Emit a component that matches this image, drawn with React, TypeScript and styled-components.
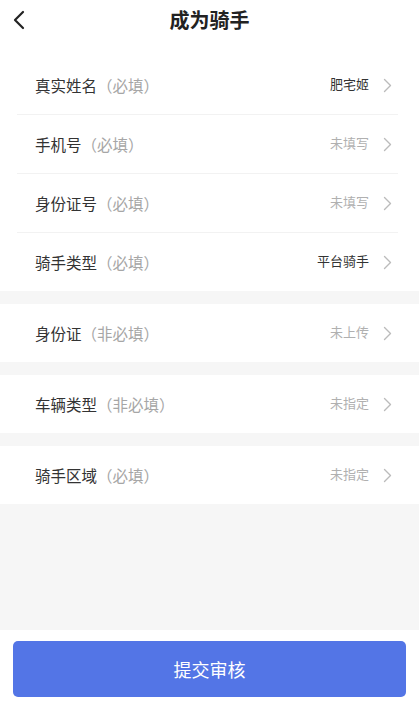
import React from "react";
import styled, { createGlobalStyle } from "styled-components";

const Global = createGlobalStyle`
  html, body { margin: 0; padding: 0; }
  body {
    font-family: "Noto Sans CJK SC", "Noto Sans", sans-serif;
    background: #f6f6f6;
  }
  * { box-sizing: border-box; }
`;

const Page = styled.div`
  width: 419px;
  height: 708px;
  display: flex;
  flex-direction: column;
  background: #f6f6f6;
`;

const Header = styled.header`
  height: 56px;
  background: #fff;
  display: flex;
  align-items: flex-start;
  justify-content: center;
  position: relative;
`;

const Title = styled.h1`
  margin: 0;
  height: 40px;
  line-height: 40px;
  font-size: 20px;
  font-weight: 700;
  color: #222;
`;

const Back = styled.button`
  position: absolute;
  left: 8px;
  top: 8px;
  width: 22px;
  height: 24px;
  border: 0;
  padding: 0;
  background: transparent;
  display: flex;
  align-items: center;
  justify-content: center;
`;

const Groups = styled.div`
  display: flex;
  flex-direction: column;
  gap: 13px;
  flex: 1;
`;

const Group = styled.section`
  background: #fff;
  display: flex;
  flex-direction: column;
`;

const Row = styled.div<{ $divider: boolean }>`
  height: ${(p) => (p.$divider ? 59 : 58)}px;
  margin: 0 21px 0 17px;
  padding: 0 6px 0 18px;
  display: flex;
  align-items: center;
  border-bottom: ${(p) => (p.$divider ? "1px solid #f2f2f2" : "0")};
`;

const Label = styled.span`
  font-size: 15.5px;
  color: #333;
  flex: 1;
`;

const Hint = styled.span`
  color: #a6a6a6;
`;

const Value = styled.span<{ $filled: boolean }>`
  font-size: 13px;
  color: ${(p) => (p.$filled ? "#333" : "#b0b0b0")};
  margin-right: 14px;
  position: relative;
  top: -2px;
`;

const Footer = styled.footer`
  height: 78px;
  background: #fff;
  padding: 11px 13px 11px 13px;
`;

const Submit = styled.button`
  width: 100%;
  height: 56px;
  border: 0;
  border-radius: 5px;
  background: #5375e6;
  color: #fff;
  font-family: inherit;
  font-size: 18px;
`;

const Chevron = () => (
  <svg width="9" height="15" viewBox="0 0 9 15">
    <path d="M1.5 1.5 L7.5 7.5 L1.5 13.5" fill="none" stroke="#bbbbbb" strokeWidth="1.4" strokeLinecap="round" strokeLinejoin="round" />
  </svg>
);

type Item = { label: string; hint: string; value: string; filled: boolean };

const groups: Item[][] = [
  [
    { label: "真实姓名", hint: "（必填）", value: "肥宅姬", filled: true },
    { label: "手机号", hint: "（必填）", value: "未填写", filled: false },
    { label: "身份证号", hint: "（必填）", value: "未填写", filled: false },
    { label: "骑手类型", hint: "（必填）", value: "平台骑手", filled: true },
  ],
  [{ label: "身份证", hint: "（非必填）", value: "未上传", filled: false }],
  [{ label: "车辆类型", hint: "（非必填）", value: "未指定", filled: false }],
  [{ label: "骑手区域", hint: "（必填）", value: "未指定", filled: false }],
];

export default function App() {
  return (
    <Page>
      <Global />
      <Header>
        <Back aria-label="返回">
          <svg width="14" height="20" viewBox="0 0 14 20">
            <path d="M11 2 L3 10 L11 18" fill="none" stroke="#222" strokeWidth="2.2" strokeLinecap="round" strokeLinejoin="round" />
          </svg>
        </Back>
        <Title>成为骑手</Title>
      </Header>
      <Groups>
        {groups.map((g, gi) => (
          <Group key={gi}>
            {g.map((it, i) => (
              <Row key={it.label} $divider={i < g.length - 1}>
                <Label>
                  {it.label}
                  <Hint>{it.hint}</Hint>
                </Label>
                <Value $filled={it.filled}>{it.value}</Value>
                <Chevron />
              </Row>
            ))}
          </Group>
        ))}
      </Groups>
      <Footer>
        <Submit>提交审核</Submit>
      </Footer>
    </Page>
  );
}
